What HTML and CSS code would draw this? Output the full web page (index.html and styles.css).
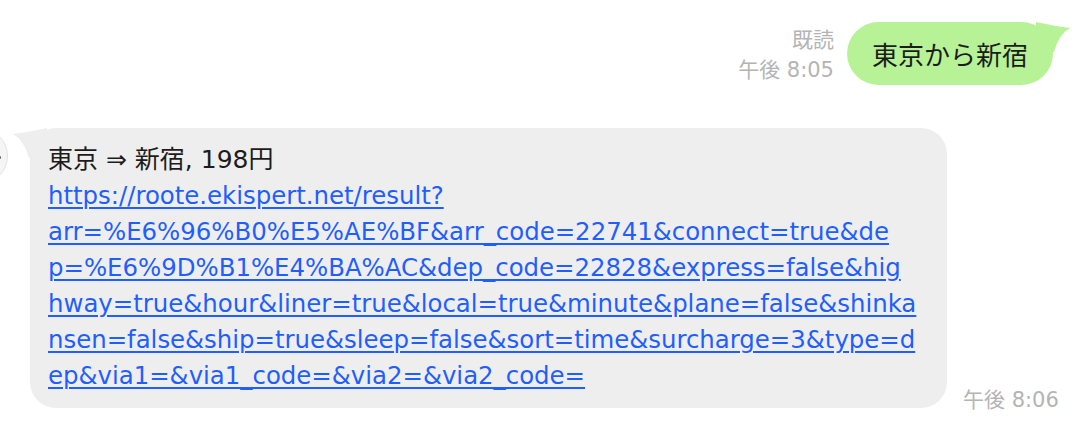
FILE: index.html
```html
<!DOCTYPE html>
<html lang="ja">
<head>
<meta charset="utf-8">
<link rel="stylesheet" href="styles.css">
</head>
<body>
<div class="chat">
  <div class="row row-out">
    <div class="meta meta-out">
      <span>既読</span>
      <span>午後 8:05</span>
    </div>
    <div class="bubble bubble-out">
      <svg class="tail tail-out" width="36" height="32" viewBox="0 0 36 32"><path d="M0 1 Q18 5 34 7 Q23 13 18 31 L0 31 Z" fill="#b7f396"/></svg>
      <span class="text">東京から新宿</span>
    </div>
  </div>
  <div class="row row-in">
    <div class="avatar"><span class="avatar-dot"></span></div>
    <div class="bubble bubble-in">
      <svg class="tail tail-in" width="36" height="32" viewBox="0 0 36 32"><path d="M36 1 Q18 5 2 7 Q13 13 18 31 L36 31 Z" fill="#eeeeee"/></svg>
      <div class="text">東京 ⇒ 新宿, 198円<br><a class="link" href="#">https://roote.ekispert.net/result?<br>arr=%E6%96%B0%E5%AE%BF&amp;arr_code=22741&amp;connect=true&amp;de<br>p=%E6%9D%B1%E4%BA%AC&amp;dep_code=22828&amp;express=false&amp;hig<br>hway=true&amp;hour&amp;liner=true&amp;local=true&amp;minute&amp;plane=false&amp;shinka<br>nsen=false&amp;ship=true&amp;sleep=false&amp;sort=time&amp;surcharge=3&amp;type=d<br>ep&amp;via1=&amp;via1_code=&amp;via2=&amp;via2_code=</a></div>
    </div>
    <div class="meta meta-in">
      <span>午後 8:06</span>
    </div>
  </div>
</div>
</body>
</html>
```
FILE: styles.css
```css
* { box-sizing: border-box; }
html, body {
  margin: 0;
  padding: 0;
  background: #ffffff;
  width: 1088px;
  height: 424px;
  overflow: hidden;
}
body {
  font-family: "DejaVu Sans", "Noto Sans CJK JP", sans-serif;
  color: #1c1c1c;
}
.chat {
  display: flex;
  flex-direction: column;
}
.row {
  display: flex;
  align-items: flex-end;
}
.row-out {
  justify-content: flex-end;
  padding-top: 14px;
  padding-right: 35px;
  gap: 13px;
}
.meta {
  display: flex;
  flex-direction: column;
  align-items: flex-end;
  color: #b4b4b4;
  font-size: 21px;
  line-height: 30px;
}
.meta-out {
  align-self: flex-start;
  margin-top: 11px;
}
.bubble {
  position: relative;
}
.bubble-out {
  background: #b7f396;
  height: 63px;
  border-radius: 32px;
  padding: 0 25px;
  display: flex;
  align-items: center;
  font-family: "Noto Sans CJK JP", sans-serif;
  font-size: 26px;
}
.tail {
  position: absolute;
  top: -1px;
}
.tail-out {
  right: -19px;
}
.tail-in {
  left: -19px;
}
.row-in {
  margin-top: 43px;
}
.avatar {
  position: relative;
  width: 56px;
  height: 56px;
  margin-left: -48px;
  margin-right: 22px;
  align-self: flex-start;
  border-radius: 50%;
  background: #f5f5f5;
  border: 1px solid #e4e4e4;
}
.avatar-dot {
  position: absolute;
  right: 6px;
  top: 27px;
  width: 3px;
  height: 3px;
  border-radius: 50%;
  background: #555;
}
.bubble-in {
  background: #eeeeee;
  width: 917px;
  border-radius: 26px;
  padding: 14px 18px;
  font-size: 25px;
  line-height: 36px;
}
.link {
  color: #1f5eff;
  font-size: 24.4px;
  text-decoration: underline;
  text-decoration-thickness: 1.5px;
  text-underline-offset: 3px;
}
.meta-in {
  margin-left: 16px;
  line-height: 16px;
}
```
